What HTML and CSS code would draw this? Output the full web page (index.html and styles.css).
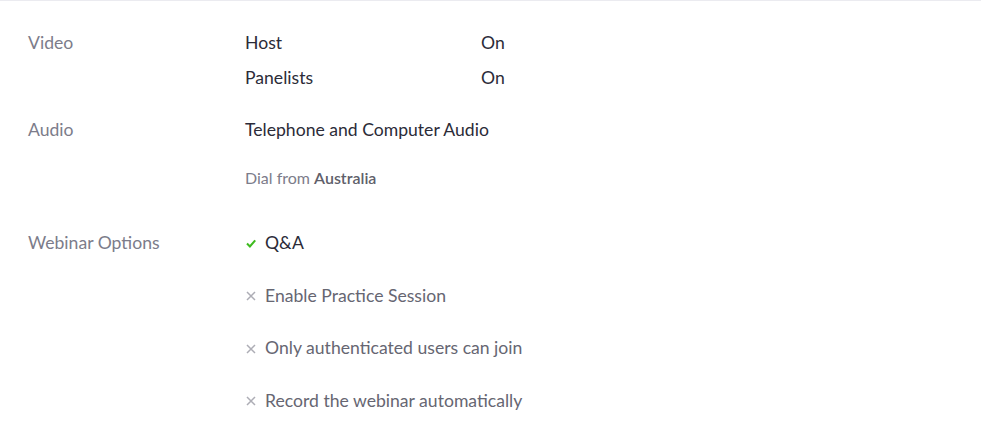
FILE: index.html
```html
<!DOCTYPE html>
<html lang="en">
<head>
  <meta charset="UTF-8">
  <title>Webinar settings</title>
  <link rel="stylesheet" href="styles.css">
</head>
<body>

  <div class="settings">

    <div class="row">
      <div class="label">Video</div>
      <div class="value pairs">
        <div class="pair"><span class="pair-name">Host</span><span>On</span></div>
        <div class="pair"><span class="pair-name">Panelists</span><span>On</span></div>
      </div>
    </div>

    <div class="row">
      <div class="label">Audio</div>
      <div class="value">
        <div>Telephone and Computer Audio</div>
        <div class="dial">Dial from <strong>Australia</strong></div>
      </div>
    </div>

    <div class="row">
      <div class="label">Webinar Options</div>
      <div class="value options">
        <div class="option on">
          <svg class="icon" viewBox="0 0 10 9" width="10" height="9"><path d="M1 4.6 L3.9 7.4 L9.2 1.4" fill="none" stroke="#3ebb1f" stroke-width="2.1"/></svg>
          Q&amp;A
        </div>
        <div class="option off">
          <svg class="icon" viewBox="0 0 10 10" width="10" height="10"><path d="M1 1 L9 9 M9 1 L1 9" fill="none" stroke="#adadb5" stroke-width="1.5"/></svg>
          Enable Practice Session
        </div>
        <div class="option off">
          <svg class="icon" viewBox="0 0 10 10" width="10" height="10"><path d="M1 1 L9 9 M9 1 L1 9" fill="none" stroke="#adadb5" stroke-width="1.5"/></svg>
          Only authenticated users can join
        </div>
        <div class="option off">
          <svg class="icon" viewBox="0 0 10 10" width="10" height="10"><path d="M1 1 L9 9 M9 1 L1 9" fill="none" stroke="#adadb5" stroke-width="1.5"/></svg>
          Record the webinar automatically
        </div>
      </div>
    </div>

  </div>

</body>
</html>
```

FILE: styles.css
```css
body {
  margin: 0;
  font-family: Lato, 'Open Sans', sans-serif;
  font-size: 17.6px;
  line-height: 24px;
  color: #2b2b38;
  background: #fff;
}

.settings {
  border-top: 1px solid #ebebf0;
  padding: 30px 28px 0 28px;
}

.row {
  display: grid;
  grid-template-columns: 217px 1fr;
  margin-bottom: 28px;
}

.row:nth-child(2) {
  margin-bottom: 43px;
}

.label {
  color: #7c7c8a;
}

.pairs {
  display: flex;
  flex-direction: column;
  gap: 11px;
}

.pair-name {
  display: inline-block;
  width: 236px;
}

.dial {
  margin-top: 26px;
  font-size: 16px;
  line-height: 20px;
  color: #7c7c8a;
}

.dial strong {
  font-weight: 600;
  color: #5f5f6b;
}

.options {
  display: flex;
  flex-direction: column;
  gap: 28.5px;
}

.option {
  display: flex;
  align-items: center;
}

.icon {
  margin: 1px 9px 0 1px;
}

.option.off {
  color: #666672;
}
```
